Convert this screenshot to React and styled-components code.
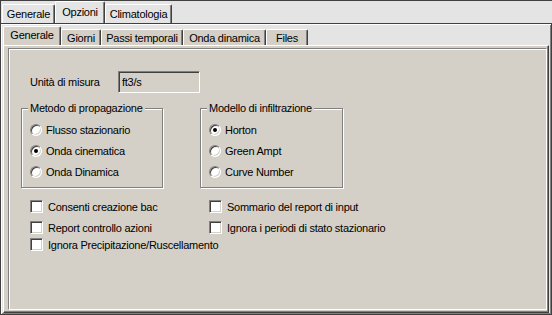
import React from 'react';
import styled, { createGlobalStyle } from 'styled-components';

const Global = createGlobalStyle`
  html, body {
    margin: 0;
    padding: 0;
    background: #e4e4e4;
  }
  * {
    box-sizing: border-box;
  }
`;

const Window = styled.div`
  width: 552px;
  height: 315px;
  display: flex;
  flex-direction: column;
  background: #e4e4e4;
  border-top: 1px solid #404040;
  border-left: 1px solid #404040;
  font-family: 'Liberation Sans', Arial, sans-serif;
  font-size: 11px;
  letter-spacing: -0.25px;
  color: #000;
  overflow: hidden;
`;

const TabStrip = styled.div`
  display: flex;
  align-items: flex-end;
  height: ${p => p.$h}px;
  padding-left: ${p => p.$left}px;
  flex: none;
`;

const Tab = styled.div`
  width: ${p => p.$w}px;
  height: ${p => p.$h}px;
  display: flex;
  align-items: center;
  justify-content: center;
  padding-bottom: ${p => (p.$active ? 2 : 0)}px;
  background: ${p => p.$bg};
  border-top: 1px solid #fff;
  border-left: 1px solid #fff;
  border-right: 1px solid #404040;
  border-radius: 2px 2px 0 0;
  box-shadow: inset -1px 0 0 #808080;
  white-space: nowrap;
`;

const OuterPage = styled.div`
  flex: 1;
  display: flex;
  flex-direction: column;
  border-top: 1px solid #404040;
  border-right: 1px solid #404040;
  border-bottom: 1px solid #404040;
  box-shadow: inset 1px 1px 0 #fff, inset -1px -1px 0 #808080;
  padding: 1px 2px 1px 2px;
`;

const Sheet = styled.div`
  flex: 1;
  display: flex;
  background: #d4d0c8;
  border-top: 1px solid #fff;
  border-left: 1px solid #fff;
  border-right: 1px solid #404040;
  border-bottom: 1px solid #404040;
  box-shadow: inset -1px -1px 0 #808080;
  padding: 2px 1px 2px 4px;
`;

const Panel = styled.div`
  flex: 1;
  display: flex;
  flex-direction: column;
  border: 1px solid;
  border-color: #808080 #fff #fff #808080;
  box-shadow: inset 1px 1px 0 #fff;
  padding: 22px 0 0 12px;
`;

const UnitRow = styled.div`
  display: flex;
  align-items: center;
  height: 22px;
  padding-left: 9px;
`;

const UnitLabel = styled.span`
  width: 88px;
`;

const Edit = styled.div`
  width: 82px;
  height: 22px;
  display: flex;
  align-items: center;
  padding-left: 3px;
  background: #d4d0c8;
  border: 1px solid;
  border-color: #808080 #fff #fff #808080;
  box-shadow: inset 1px 1px 0 #404040;
`;

const GroupRow = styled.div`
  display: flex;
  gap: 37px;
  margin-top: 15px;
`;

const Group = styled.div`
  position: relative;
  width: ${p => p.$w}px;
  height: 80px;
  border: 1px solid #808080;
  box-shadow: inset 1px 1px 0 #fff, 1px 1px 0 #fff;
  padding: 10px 0 0 8px;
  display: flex;
  flex-direction: column;
`;

const GroupTitle = styled.span`
  position: absolute;
  top: -7px;
  left: 6px;
  line-height: 13px;
  padding: 0 2px 0 2px;
  background: #d4d0c8;
`;

const Option = styled.div`
  display: flex;
  align-items: center;
  gap: 4px;
  height: 21px;
`;

const Radio = styled.span`
  position: relative;
  width: 12px;
  height: 12px;
  flex: none;
  border-radius: 50%;
  background: #fff;
  border: 1px solid;
  border-color: #808080 #fff #fff #808080;
  box-shadow: inset 1px 1px 0 #404040, inset -1px -1px 0 #d4d0c8;

  &::after {
    content: '';
    display: ${p => (p.$on ? 'block' : 'none')};
    position: absolute;
    left: 3px;
    top: 3px;
    width: 4px;
    height: 4px;
    border-radius: 50%;
    background: #000;
  }
`;

const CheckGrid = styled.div`
  display: grid;
  grid-template-columns: 179px 200px;
  row-gap: 8px;
  margin-top: 12px;
  padding-left: 9px;
`;

const CheckItem = styled.div`
  display: flex;
  align-items: center;
  gap: 5px;
  height: 13px;
  white-space: nowrap;
  grid-column: ${p => (p.$wide ? '1 / -1' : 'auto')};
  margin-top: ${p => (p.$wide ? -4 : 0)}px;
`;

const Box = styled.span`
  width: 13px;
  height: 13px;
  flex: none;
  background: #fff;
  border: 1px solid;
  border-color: #808080 #fff #fff #808080;
  box-shadow: inset 1px 1px 0 #404040, inset -1px -1px 0 #d4d0c8;
`;

const outerTabs = [
  { label: 'Generale', w: 53 },
  { label: 'Opzioni', w: 50, active: true },
  { label: 'Climatologia', w: 67 },
];

const innerTabs = [
  { label: 'Generale', w: 58, active: true },
  { label: 'Giorni', w: 40 },
  { label: 'Passi temporali', w: 82 },
  { label: 'Onda dinamica', w: 83 },
  { label: 'Files', w: 42 },
];

const metodo = [
  { label: 'Flusso stazionario' },
  { label: 'Onda cinematica', on: true },
  { label: 'Onda Dinamica' },
];

const modello = [
  { label: 'Horton', on: true },
  { label: 'Green Ampt' },
  { label: 'Curve Number' },
];

const checks = [
  { label: 'Consenti creazione bac' },
  { label: 'Sommario del report di input' },
  { label: 'Report controllo azioni' },
  { label: 'Ignora i periodi di stato stazionario' },
  { label: 'Ignora Precipitazione/Ruscellamento', wide: true },
];

function App() {
  return (
    <>
      <Global />
      <Window>
        <TabStrip $h={22} $left={1}>
          {outerTabs.map(t => (
            <Tab key={t.label} $w={t.w} $h={t.active ? 22 : 19} $active={t.active} $bg="#e4e4e4">
              {t.label}
            </Tab>
          ))}
        </TabStrip>
        <OuterPage>
          <TabStrip $h={20} $left={0}>
            {innerTabs.map(t => (
              <Tab key={t.label} $w={t.w} $h={t.active ? 19 : 16} $active={t.active} $bg="#d4d0c8">
                {t.label}
              </Tab>
            ))}
          </TabStrip>
          <Sheet>
            <Panel>
              <UnitRow>
                <UnitLabel>Unità di misura</UnitLabel>
                <Edit>ft3/s</Edit>
              </UnitRow>
              <GroupRow>
                <Group $w={142}>
                  <GroupTitle>Metodo di propagazione</GroupTitle>
                  {metodo.map(o => (
                    <Option key={o.label}>
                      <Radio $on={o.on} />
                      {o.label}
                    </Option>
                  ))}
                </Group>
                <Group $w={143}>
                  <GroupTitle>Modello di infiltrazione</GroupTitle>
                  {modello.map(o => (
                    <Option key={o.label}>
                      <Radio $on={o.on} />
                      {o.label}
                    </Option>
                  ))}
                </Group>
              </GroupRow>
              <CheckGrid>
                {checks.map(c => (
                  <CheckItem key={c.label} $wide={c.wide}>
                    <Box />
                    {c.label}
                  </CheckItem>
                ))}
              </CheckGrid>
            </Panel>
          </Sheet>
        </OuterPage>
      </Window>
    </>
  );
}

export default App;
